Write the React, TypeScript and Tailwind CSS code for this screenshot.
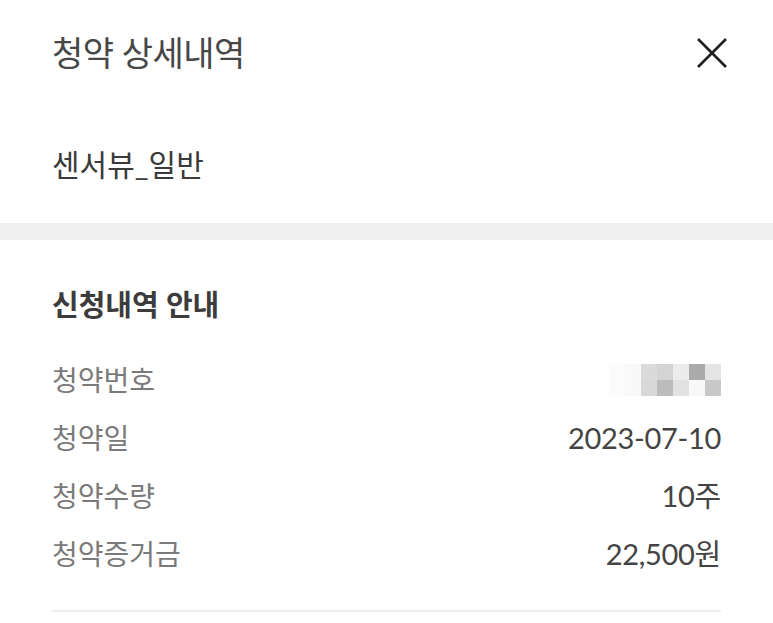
const rows: { label: string; value: string | null }[] = [
  { label: '청약번호', value: null },
  { label: '청약일', value: '2023-07-10' },
  { label: '청약수량', value: '10주' },
  { label: '청약증거금', value: '22,500원' },
];

const mosaic = [
  ['#fbfbfb', '#f9f9f9', '#dadada', '#d4d4d4', '#ececec', '#aaaaaa', '#e4e4e4'],
  ['#fbfbfb', '#f9f9f9', '#d8d8d8', '#bcbcbc', '#e2e2e2', '#f8f8f8', '#c8c8c8'],
];

function Masked() {
  return (
    <div className="flex flex-col">
      {mosaic.map((row, i) => (
        <div key={i} className="flex">
          {row.map((c, j) => (
            <div key={j} className="w-[16px] h-[16px]" style={{ backgroundColor: c }} />
          ))}
        </div>
      ))}
    </div>
  );
}

export default function App() {
  return (
    <main
      className="w-[773px] h-[623px] bg-white overflow-hidden"
      style={{ fontFamily: "Lato, 'Noto Sans CJK KR', sans-serif" }}
    >
      {/* header */}
      <header className="h-[105px] px-[52px] flex items-center justify-between">
        <h1 className="text-[34px] text-[#474747] tracking-[-0.5px]">청약 상세내역</h1>
        <button className="w-[30px] h-[30px] mr-[-6px]">
          <svg viewBox="0 0 30 30" className="w-[30px] h-[30px]">
            <path d="M1 1 L29 29 M29 1 L1 29" stroke="#1f1f1f" strokeWidth="2.6" fill="none" />
          </svg>
        </button>
      </header>

      {/* product name */}
      <div className="h-[118px] px-[52px] flex items-center">
        <h2 className="text-[30px] text-[#3a3a3a]">센서뷰_일반</h2>
      </div>

      <div className="h-[17px] bg-[#f0f0f0]" />

      {/* 신청내역 */}
      <section className="px-[52px] pt-[45px]">
        <h3 className="h-[40px] flex items-center text-[29px] font-semibold text-[#3c3c3c]">신청내역 안내</h3>
        <div className="mt-[26px]">
          {rows.map((r) => (
            <div key={r.label} className="h-[58px] flex items-center justify-between">
              <span className="text-[28px] text-[#7a7a7a]">{r.label}</span>
              {r.value ? <span className="text-[29px] text-[#444] tracking-[-0.3px]">{r.value}</span> : <Masked />}
            </div>
          ))}
        </div>
        <div className="mt-[27px] h-[2px] bg-[#ececec]" />
      </section>
    </main>
  );
}
